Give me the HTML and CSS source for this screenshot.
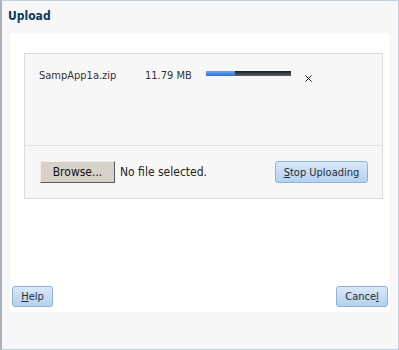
FILE: index.html
```html
<!DOCTYPE html>
<html>
<head>
<meta charset="utf-8">
<link rel="stylesheet" href="styles.css">
</head>
<body>
<div class="dialog">
  <div class="title">Upload</div>
  <div class="content">
    <div class="panel">
      <div class="files">
        <div class="file-row">
          <span class="fname">SampApp1a.zip</span>
          <span class="fsize">11.79 MB</span>
          <span class="progress"><span class="done" style="width:34%"></span></span>
          <svg class="remove" width="8" height="8" viewBox="0 0 8 8"><path d="M0.5 0.5L7.5 7.5M7.5 0.5L0.5 7.5" stroke="#111" stroke-width="1.1" fill="none"/></svg>
        </div>
      </div>
      <div class="picker">
        <button class="browse">Browse...</button>
        <span class="nofile">No file selected.</span>
        <button class="btn stop"><u>S</u>top Uploading</button>
      </div>
    </div>
    <div class="spacer"></div>
    <div class="footer">
      <button class="btn help"><u>H</u>elp</button>
      <button class="btn cancel">Cance<u>l</u></button>
    </div>
  </div>
</div>
</body>
</html>
```
FILE: styles.css
```css
* { box-sizing: border-box; }
html, body { margin: 0; padding: 0; }
body {
  width: 399px;
  height: 350px;
  font-family: "DejaVu Sans Condensed", "DejaVu Sans", sans-serif;
  font-size: 11px;
  color: #333;
}
.dialog {
  width: 399px;
  height: 350px;
  background: #f7f7f7;
  border: 1px solid #c3cfdc;
  border-left: 2px solid #a9b0b8;
  display: flex;
  flex-direction: column;
  padding: 0 8px 37px 8px;
}
.title {
  height: 32px;
  padding: 8px 0 0 0;
  margin-left: -2px;
  font-weight: bold;
  font-size: 12px;
  color: #0d3b5e;
}
.content {
  flex: 1;
  background: #fff;
  display: flex;
  flex-direction: column;
  padding: 20px 0 5px 0;
}
.panel {
  margin: 0 7px 0 14px;
  background: #f7f7f7;
  border: 1px solid #dcdcdc;
  height: 146px;
  display: flex;
  flex-direction: column;
}
.files {
  height: 92px;
  border-bottom: 1px solid #e2e2e2;
  padding: 14px 0 0 14px;
}
.file-row {
  display: flex;
  align-items: center;
  height: 14px;
}
.fname { width: 106px; }
.fsize { width: 61px; }
.progress {
  width: 85px;
  height: 5px;
  background: linear-gradient(#1b1b1b, #5d6570);
  display: inline-block;
  margin-top: -3px;
}
.done {
  display: block;
  height: 5px;
  background: linear-gradient(#6aa8ee, #2e72d6);
}
.remove {
  margin-left: 14px;
  margin-top: 7px;
  width: 7px;
  height: 7px;
}
.picker {
  flex: 1;
  display: flex;
  align-items: center;
  padding: 0 14px 0 15px;
}
.browse {
  font-family: "DejaVu Sans Condensed", "DejaVu Sans", sans-serif;
  font-size: 12px;
  height: 22px;
  width: 75px;
  padding: 0;
  background: #d6d2ca;
  border: 1px solid;
  border-color: #f0eee9 #5a5a5a #5a5a5a #f0eee9;
  color: #111;
}
.nofile {
  margin-left: 5px;
  font-size: 12px;
  color: #222;
  flex: 1;
}
.btn {
  font-family: "DejaVu Sans Condensed", "DejaVu Sans", sans-serif;
  font-size: 11px;
  height: 22px;
  padding: 0;
  border: 1px solid #8eb2d5;
  border-radius: 3px;
  background: linear-gradient(#d9e8f8, #b5d1ef);
  color: #1f2d3d;
}
.btn u { text-decoration: underline; }
.stop { width: 93px; }
.spacer { flex: 1; }
.footer {
  display: flex;
  justify-content: space-between;
  height: 21px;
  padding: 0 2px;
}
.help { width: 41px; height: 21px; }
.cancel { width: 52px; height: 21px; }
```
